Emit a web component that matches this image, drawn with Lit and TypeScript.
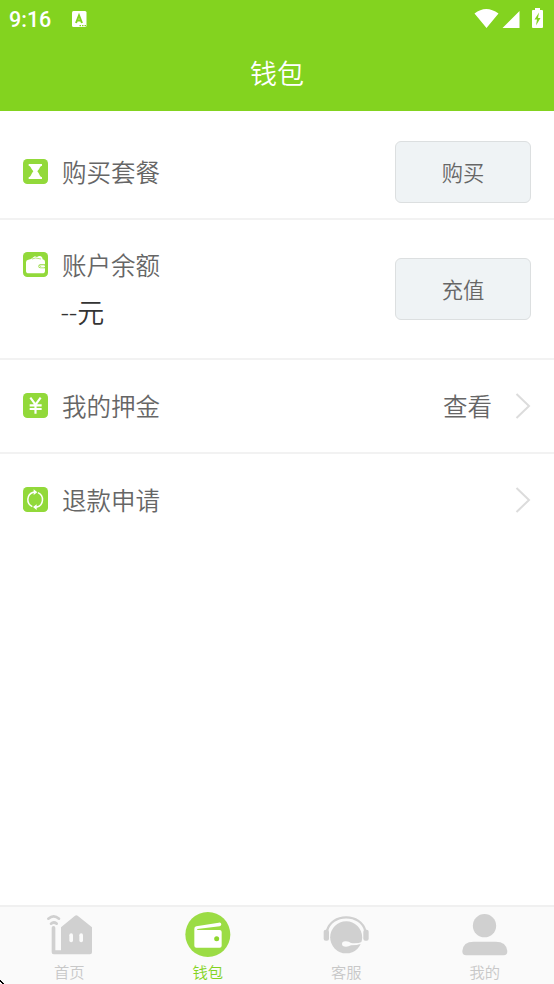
import { LitElement, html, css, svg } from 'lit';
import { customElement, property } from 'lit/decorators.js';

const rowIcons: Record<string, unknown> = {
  hourglass: svg`
    <path fill="#fff" d="M17 15H57V20Q53 21 51 25Q48 32 43 37Q48 43 51 50Q53 54 57 55V60H17V55Q21 54 23 50Q26 43 31 37Q26 32 23 25Q21 21 17 20Z" />
  `,
  wallet: svg`
    <path fill="#fff" d="M9 31Q9 24 16 23L24 21L33 14Q36 11 39 14L42 15Q49 10 54 13Q59 16 59 22Q66 23 66 29V37H52Q46 37 46 43Q46 49 52 49H66V57Q66 64 58 64H17Q9 64 9 57Z" />
    <path fill="none" stroke="#92d93a" stroke-width="2" d="M27 21L38 18L54 21" />
    <rect x="49" y="39.500" width="17" height="7" rx="3.500" fill="#fff" />
    <circle cx="53" cy="43" r="1.500" fill="#92d93a" />
  `,
  yen: svg`
    <path fill="none" stroke="#fff" stroke-width="6.500" d="M22 14L37.500 35L53 14M20 37H56M20 48H56M37.500 34V62" />
  `,
  refund: svg`
    <path fill="none" stroke="#fff" stroke-width="4.500" d="M28 59A23 23 0 0 1 31 16H37M45 17A23 23 0 0 1 42 60H36" />
    <path fill="#fff" d="M32 7L43 16L32 24ZM41 52L30 60L41 69Z" />
  `,
};

const tabIcons: Record<string, unknown> = {
  home: svg`
    <g fill="none" stroke="#d0d0d0" stroke-width="8" stroke-linecap="round">
      <path d="M7 23Q23 9 39 23M15 38Q23 31 32 38" />
    </g>
    <path fill="#d0d0d0" d="M17 50Q17 45 22.500 45Q28 45 28 50V118H45V49L87 14Q91 11 95 14L138 49V124Q138 130 132 130H23Q17 130 17 124Z" />
    <rect x="70" y="67" width="11" height="27" rx="5.500" fill="#fafafa" />
    <rect x="100" y="67" width="11" height="27" rx="5.500" fill="#fafafa" />
  `,
  wallet: svg`
    <circle cx="68.500" cy="70.500" r="67.500" fill="#9bdc44" />
    <path fill="#fff" d="M28 53Q28 47 34 46L101 35Q109 34 109 40Q109 44 104 46L37 54Q34 57 39 57H104Q110 57 110 63V104Q110 110 104 110H34Q28 110 28 104Z" />
    <circle cx="95" cy="83" r="7.500" fill="#8ed72f" />
  `,
  service: svg`
    <path fill="none" stroke="#d0d0d0" stroke-width="7" d="M12 59C19 34 42 19 69.500 19S120 34 127 59" />
    <rect x="2" y="56" width="16" height="33" rx="6" fill="#d0d0d0" />
    <rect x="121" y="56" width="16" height="33" rx="6" fill="#d0d0d0" />
    <circle cx="69.500" cy="79" r="48" fill="#d0d0d0" />
    <path fill="#fafafa" d="M57 99Q57 90 69 91Q78 92 84 96Q101 99 119 92L115 98Q103 103 84 103Q77 107 69 107Q57 107 57 99Z" />
  `,
  profile: svg`
    <circle cx="67.500" cy="44" r="35" fill="#d0d0d0" />
    <path fill="#d0d0d0" d="M1 120Q3 92 35 92H101Q133 92 136 120Q136 133 125 133H12Q1 133 1 120Z" />
  `,
};

@customElement('status-bar')
export class StatusBar extends LitElement {
  static styles = css`
    :host {
      display: flex;
      align-items: center;
      box-sizing: border-box;
      height: 38px;
      padding: 0 9px;
      color: #fff;
      font: 500 21.500px/38px Roboto, sans-serif;
    }
    .time {
      width: 63px;
      padding-top: 2px;
    }
    .signals {
      margin-left: auto;
    }
    svg {
      display: block;
    }
  `;

  render() {
    return html`
      <span class="time">9:16</span>
      <svg width="15" height="17" viewBox="0 0 15 17">
        <rect width="14.500" height="16" rx="1.500" fill="#fff" />
        <path fill="none" stroke="#83d31f" stroke-width="2" d="M4 12L7 4.500L10 12M5 9.500H9" />
        <path fill="#83d31f" d="M7.500 14h1.500v1.200h-1.500zM10 14h1.500v1.200h-1.500zM12.500 14h1.500v1.200h-1.500z" />
      </svg>
      <svg class="signals" width="71" height="22" viewBox="0 0 71 22">
        <path fill="#fff" d="M0.500 5.500Q12 -3.500 24.500 5.500L12.500 20ZM28.500 20L45.500 3V20ZM58 3Q58 2 59 2H61V0H66V2H68Q69 2 69 3V19Q69 20 68 20H59Q58 20 58 19Z" />
        <path fill="#83d31f" d="M65 4.500L60.500 11.500H63L62 17.500L66.500 10H64Z" />
      </svg>
    `;
  }
}

@customElement('wallet-row')
export class WalletRow extends LitElement {
  @property({ type: String }) icon = '';

  @property({ type: String }) label = '';

  @property({ type: String }) amount = '';

  @property({ type: String }) action = '';

  @property({ type: String }) link = '';

  @property({ type: Boolean }) arrow = false;

  static styles = css`
    :host {
      display: flex;
      align-items: center;
      box-sizing: border-box;
      padding: 0 23px;
      color: #666;
    }
    .info {
      flex: 1;
      margin-bottom: 2px;
    }
    .heading {
      display: flex;
      align-items: center;
      gap: 14px;
      height: 36px;
      font-size: 24.500px;
    }
    .amount {
      height: 36px;
      margin: 12px 0 0 38px;
      color: #333;
      font-family: Roboto, 'Noto Sans CJK SC', sans-serif;
      font-size: 27px;
      letter-spacing: 0.4px;
      line-height: 41px;
    }
    .action {
      box-sizing: border-box;
      width: 136px;
      height: 62px;
      border: 1px solid #dcdfe0;
      border-radius: 6px;
      padding: 0 0 2px;
      background: #eff3f5;
      color: #666;
      font: inherit;
      font-size: 21.300px;
    }
    .link {
      margin: 0 23px 2px 0;
      font-size: 24.500px;
    }
    svg {
      display: block;
      flex: none;
    }
  `;

  render() {
    return html`
      <div class="info">
        <div class="heading">
          <svg width="25" height="25" viewBox="0 0 75 75">
            <rect width="75" height="75" rx="13" fill="#92d93a" />
            ${rowIcons[this.icon]}
          </svg>
          <span>${this.label}</span>
        </div>
        ${this.amount !== '' ? html`<div class="amount">${this.amount}</div>` : html``}
      </div>
      ${this.link !== '' ? html`<span class="link">${this.link}</span>` : html``}
      ${this.action !== '' ? html`<button class="action">${this.action}</button>` : html``}
      ${this.arrow
        ? html`
            <svg width="16" height="26" viewBox="0 0 16 26">
              <path fill="none" stroke="#dcdcdc" stroke-width="2" d="M1.500 1L14 13L1.500 25" />
            </svg>
          `
        : html``}
    `;
  }
}

@customElement('tab-item')
export class TabItem extends LitElement {
  @property({ type: String }) icon = '';

  @property({ type: String }) label = '';

  static styles = css`
    :host {
      display: flex;
      flex: 1;
      flex-direction: column;
      align-items: center;
      padding-top: 4px;
      color: #c8c8c8;
      font-size: 15.300px;
      line-height: 20px;
    }
    :host([selected]) {
      color: #83d31f;
    }
    svg {
      display: block;
      margin-bottom: 4px;
    }
  `;

  render() {
    return html`
      <svg width="46" height="46" viewBox="0 0 138 138">${tabIcons[this.icon]}</svg>
      <span>${this.label}</span>
    `;
  }
}

@customElement('app-root')
export class AppRoot extends LitElement {
  static styles = css`
    :host {
      position: relative;
      display: flex;
      flex-direction: column;
      height: 984px;
      overflow: hidden;
      background: #fff;
      font-family: 'Noto Sans CJK SC', sans-serif;
      font-weight: 350;
    }
    .top {
      height: 111px;
      background: #83d31f;
    }
    .title {
      margin: 0;
      color: #fff;
      font-size: 27px;
      font-weight: 350;
      line-height: 70px;
      text-align: center;
    }
    .rows {
      flex: 1;
    }
    .rows wallet-row {
      height: 94px;
      border-bottom: 2px solid #f2f2f2;
    }
    .rows .package {
      height: 109px;
      padding-top: 15px;
    }
    .rows .balance {
      height: 140px;
    }
    .rows .refund {
      border-bottom-color: transparent;
    }
    .tabs {
      display: flex;
      box-sizing: border-box;
      height: 79px;
      border-top: 2px solid #f0f0f0;
      background: #fafafa;
    }
    .pointer {
      position: absolute;
      bottom: 0;
      left: 0;
    }
  `;

  render() {
    return html`
      <header class="top">
        <status-bar></status-bar>
        <h1 class="title">钱包</h1>
      </header>
      <main class="rows">
        <wallet-row class="package" icon="hourglass" label="购买套餐" action="购买"></wallet-row>
        <wallet-row class="balance" icon="wallet" label="账户余额" amount="--元" action="充值"></wallet-row>
        <wallet-row icon="yen" label="我的押金" link="查看" arrow></wallet-row>
        <wallet-row class="refund" icon="refund" label="退款申请" arrow></wallet-row>
      </main>
      <nav class="tabs">
        <tab-item icon="home" label="首页"></tab-item>
        <tab-item icon="wallet" label="钱包" selected></tab-item>
        <tab-item icon="service" label="客服"></tab-item>
        <tab-item icon="profile" label="我的"></tab-item>
      </nav>
      <svg class="pointer" width="4" height="4" viewBox="0 0 4 4">
        <path d="M0 0H1V1H2V2H3V3H4V4H2V3H1V2H0Z" />
        <path fill="#fff" d="M0 2H1V3H2V4H0Z" />
      </svg>
    `;
  }
}
